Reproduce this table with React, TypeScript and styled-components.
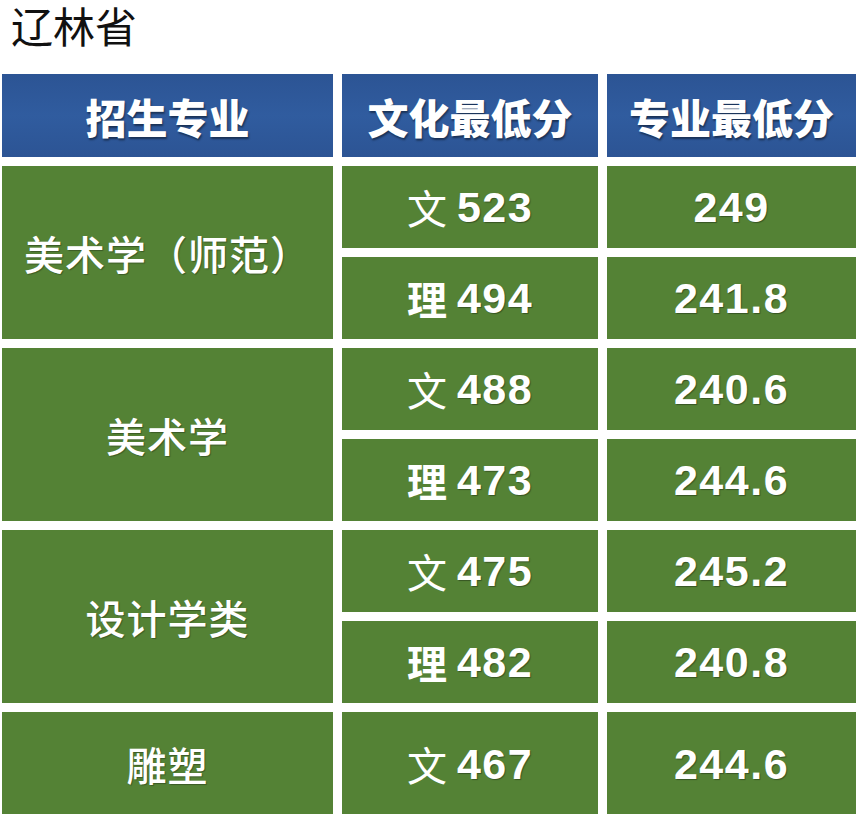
import { Fragment } from "react";
import styled, { createGlobalStyle } from "styled-components";

const GlobalStyle = createGlobalStyle`
  html, body {
    margin: 0;
    padding: 0;
    background: #ffffff;
    overflow: hidden;
  }
  body {
    font-family: "Noto Sans CJK SC", "Noto Sans", sans-serif;
  }
`;

const Page = styled.div`
  width: 856px;
  height: 814px;
  overflow: hidden;
  background: #fff;
  padding-top: 2px;
  box-sizing: border-box;
`;

const Title = styled.div`
  padding-left: 11px;
  font-size: 42px;
  line-height: 46px;
  font-weight: 400;
  color: #111;
  font-family: "Noto Sans CJK SC", sans-serif;
`;

const Table = styled.div`
  margin-top: 26px;
  padding-left: 2px;
  display: grid;
  grid-template-columns: 331px 256px 249px;
  grid-template-rows: 83px repeat(6, 82px) 104px;
  column-gap: 9px;
  row-gap: 9px;
`;

const HeadCell = styled.div`
  display: flex;
  align-items: center;
  justify-content: center;
  background: linear-gradient(180deg, #2c5494 0%, #305c9f 50%, #2c5494 100%);
  color: #fff;
  font-size: 41px;
  font-weight: 900;
  font-family: "Noto Sans CJK SC", sans-serif;
  text-shadow: 1px 2px 2px rgba(0, 0, 0, 0.45);
`;

const Cell = styled.div<{ $span?: number }>`
  display: flex;
  align-items: center;
  justify-content: center;
  background: #548235;
  color: #fff;
  grid-row: ${(p) => (p.$span ? `span ${p.$span}` : "auto")};
`;

const MajorName = styled.span`
  font-size: 40px;
  font-weight: 500;
  letter-spacing: 1px;
  font-family: "Noto Sans CJK SC", sans-serif;
  text-shadow: 1px 1px 1px rgba(0, 0, 0, 0.3);
`;

const Track = styled.span<{ $bold?: boolean }>`
  font-size: 40px;
  font-weight: ${(p) => (p.$bold ? 700 : 400)};
  font-family: "Noto Sans CJK SC", sans-serif;
  margin-right: 10px;
`;

const Score = styled.span`
  font-size: 43px;
  font-weight: 700;
  font-family: "Liberation Sans", Arial, sans-serif;
  letter-spacing: 1.5px;
  text-shadow: 1px 1px 1px rgba(0, 0, 0, 0.35);
`;

const groups = [
  {
    name: "美术学（师范）",
    rows: [
      { track: "文", culture: "523", major: "249" },
      { track: "理", culture: "494", major: "241.8" },
    ],
  },
  {
    name: "美术学",
    rows: [
      { track: "文", culture: "488", major: "240.6" },
      { track: "理", culture: "473", major: "244.6" },
    ],
  },
  {
    name: "设计学类",
    rows: [
      { track: "文", culture: "475", major: "245.2" },
      { track: "理", culture: "482", major: "240.8" },
    ],
  },
  {
    name: "雕塑",
    rows: [{ track: "文", culture: "467", major: "244.6" }],
  },
];

const App = () => {
  return (
    <Page>
      <GlobalStyle />
      <Title>辽林省</Title>
      <Table>
        <HeadCell>招生专业</HeadCell>
        <HeadCell>文化最低分</HeadCell>
        <HeadCell>专业最低分</HeadCell>
        {groups.map((g) =>
          g.rows.map((r, i) => (
            <Fragment key={g.name + i}>
              {i === 0 && (
                <Cell $span={g.rows.length}>
                  <MajorName>{g.name}</MajorName>
                </Cell>
              )}
              <Cell>
                <Track $bold={r.track === "理"}>{r.track}</Track>
                <Score>{r.culture}</Score>
              </Cell>
              <Cell>
                <Score>{r.major}</Score>
              </Cell>
            </Fragment>
          ))
        )}
      </Table>
    </Page>
  );
};

export default App;
